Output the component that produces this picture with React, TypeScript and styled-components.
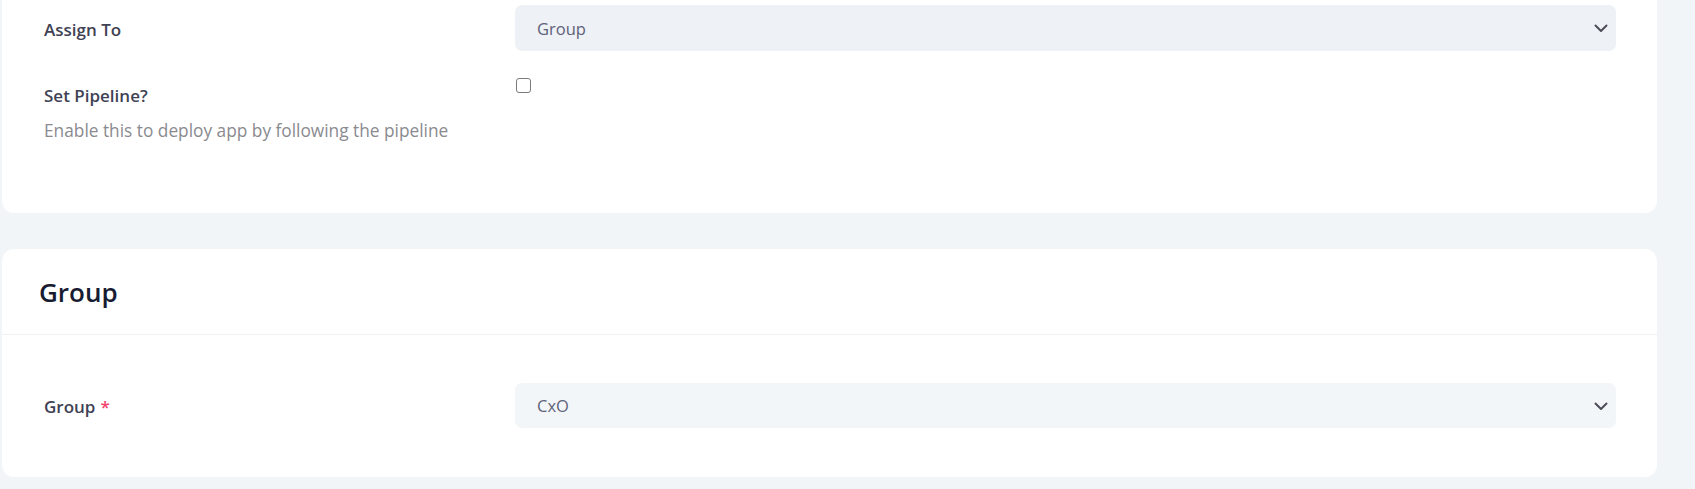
import React from 'react'
import styled, { createGlobalStyle } from 'styled-components'

const GlobalStyle = createGlobalStyle`
  html, body {
    margin: 0;
    padding: 0;
    background: #f2f5f8;
    font-family: 'Open Sans', 'Noto Sans', Arial, sans-serif;
  }
`

const Page = styled.div`
  display: flex;
  flex-direction: column;
  gap: 36px;
  padding: 0 38px 12px 2px;
`

const Card = styled.div<{ $cutTop?: boolean }>`
  background: #ffffff;
  border-radius: ${({ $cutTop }) => ($cutTop ? '0 0 12px 12px' : '12px')};
`

const CardHeader = styled.div`
  display: flex;
  align-items: center;
  height: 86px;
  padding: 0 37px;
  border-bottom: 1px solid #eff2f5;
  box-sizing: border-box;
`

const CardTitle = styled.h2`
  margin: 0;
  font-size: 26px;
  font-weight: 600;
  color: #181c32;
`

const CardBody = styled.div<{ $top: number; $bottom: number }>`
  display: flex;
  flex-direction: column;
  gap: 25px;
  padding: ${({ $top, $bottom }) => `${$top}px 41px ${$bottom}px 42px`};
`

const FieldRow = styled.div<{ $center?: boolean }>`
  display: grid;
  grid-template-columns: 471px 1fr;
  align-items: ${({ $center }) => ($center ? 'center' : 'start')};
`

const LabelCol = styled.div<{ $pad?: number }>`
  display: flex;
  flex-direction: column;
  gap: 11px;
  padding-top: ${({ $pad }) => $pad ?? 0}px;
`

const Label = styled.label`
  padding-top: 3px;
  font-size: 17px;
  font-weight: 600;
  line-height: 24px;
  color: #3f4254;
`

const Required = styled.span`
  color: #f1416c;
  margin-left: 5px;
`

const Hint = styled.div`
  font-size: 17.3px;
  line-height: 24px;
  color: #8a8a8f;
`

const SelectWrap = styled.div<{ $active?: boolean }>`
  display: flex;
  align-items: center;
  justify-content: space-between;
  height: ${({ $active }) => ($active ? 46 : 45)}px;
  padding: 0 7px 0 22px;
  border-radius: 7px;
  background: ${({ $active }) => ($active ? '#eef1f5' : '#f3f6f9')};
  color: #5e6278;
  font-size: 16.5px;
  box-sizing: border-box;
`

const CheckBox = styled.input`
  appearance: none;
  width: 15px;
  height: 15px;
  margin: 2px 0 0 1px;
  border: 1px solid #7a7a7a;
  border-radius: 3px;
  background: #fff;
`

const Chevron = () => (
  <svg width="16" height="16" viewBox="0 0 16 16" fill="none">
    <path d="M2.5 5.5l5.5 5.5 5.5-5.5" stroke="#4b4d57" strokeWidth="2" strokeLinecap="round" strokeLinejoin="round" />
  </svg>
)

function Select({ value, active }: { value: string; active?: boolean }) {
  return (
    <SelectWrap $active={active}>
      <span>{value}</span>
      <Chevron />
    </SelectWrap>
  )
}

export default function App() {
  return (
    <>
      <GlobalStyle />
      <Page>
        <Card $cutTop>
          <CardBody $top={5} $bottom={70}>
            <FieldRow $center>
              <Label>Assign To</Label>
              <Select value="Group" active />
            </FieldRow>
            <FieldRow>
              <LabelCol $pad={5}>
                <Label>Set Pipeline?</Label>
                <Hint>Enable this to deploy app by following the pipeline</Hint>
              </LabelCol>
              <div>
                <CheckBox type="checkbox" />
              </div>
            </FieldRow>
          </CardBody>
        </Card>
        <Card>
          <CardHeader>
            <CardTitle>Group</CardTitle>
          </CardHeader>
          <CardBody $top={48} $bottom={49}>
            <FieldRow $center>
              <Label>
                Group<Required>*</Required>
              </Label>
              <Select value="CxO" />
            </FieldRow>
          </CardBody>
        </Card>
      </Page>
    </>
  )
}
